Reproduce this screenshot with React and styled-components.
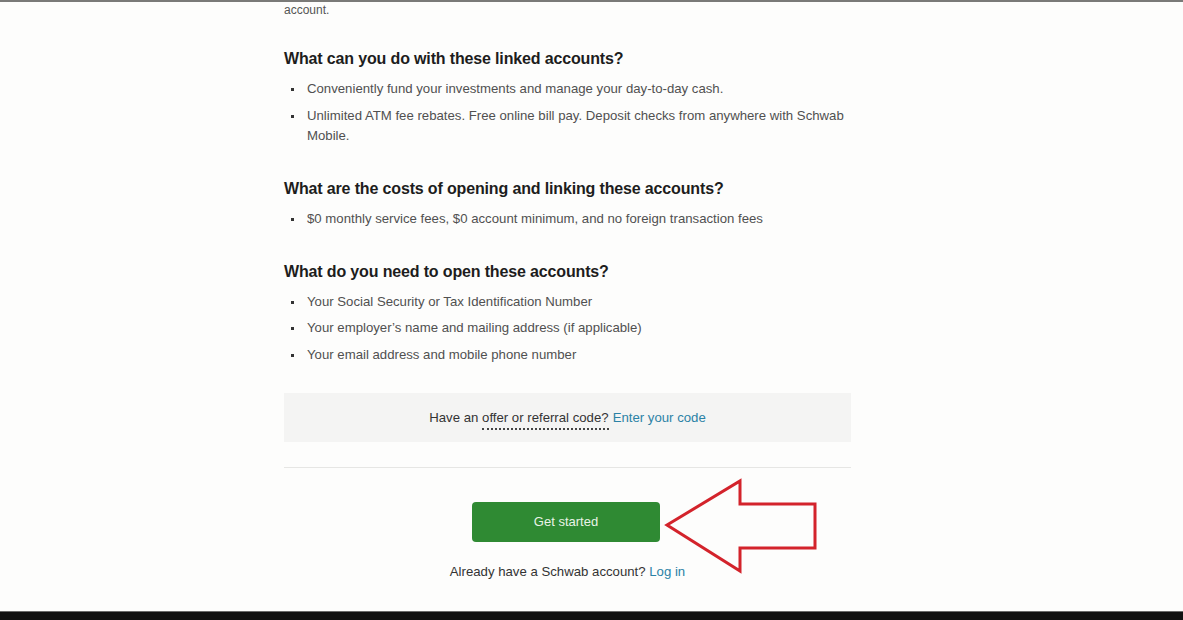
import React from 'react';
import styled, { createGlobalStyle } from 'styled-components';

const GlobalStyle = createGlobalStyle`
  html, body {
    margin: 0;
    padding: 0;
    background: #fdfdfc;
  }
  body {
    font-family: "Liberation Sans", Arial, sans-serif;
  }
`;

const Screen = styled.div`
  width: 1183px;
  height: 620px;
  display: flex;
  flex-direction: column;
  overflow: hidden;
  position: relative;
  border-top: 2px solid #7a7a78;
  box-sizing: border-box;
`;

const Page = styled.div`
  flex: 1;
  overflow: hidden;
  padding-left: 284px;
`;

const Column = styled.div`
  width: 567px;
  display: flex;
  flex-direction: column;
`;

const Tail = styled.p`
  margin: 0;
  padding-top: 1px;
  font-size: 12px;
  line-height: 14px;
  color: #555;
`;

const Heading = styled.h3`
  margin: ${(p) => p.$top}px 0 0;
  font-family: "Liberation Sans", Arial, sans-serif;
  font-size: 16px;
  font-weight: 700;
  letter-spacing: -0.15px;
  line-height: 20px;
  color: #1d1d1d;
`;

const List = styled.ul`
  margin: 10px 0 0;
  padding: 0 0 0 23px;
  list-style: none;
  display: flex;
  flex-direction: column;
  gap: 6.5px;
`;

const Item = styled.li`
  position: relative;
  font-size: 13.2px;
  line-height: 20px;
  color: #505050;
  &::before {
    content: '';
    position: absolute;
    left: -16px;
    top: 9px;
    width: 3px;
    height: 3px;
    background: #333;
  }
`;

const OfferBox = styled.div`
  margin-top: 28px;
  height: 49px;
  background: #f4f4f3;
  display: flex;
  align-items: center;
  justify-content: center;
  font-size: 13.2px;
  color: #333;
  gap: 4px;
`;

const Dotted = styled.span`
  border-bottom: 2px dotted #444;
  padding-bottom: 3px;
`;

const Link = styled.a`
  color: #2b82a6;
  text-decoration: none;
`;

const Rule = styled.hr`
  margin: 25px 0 0;
  border: none;
  border-top: 1px solid #e6e6e4;
`;

const Actions = styled.div`
  display: flex;
  flex-direction: column;
  align-items: center;
  margin-top: 34px;
`;

const StartButton = styled.button`
  width: 188px;
  height: 40px;
  border: none;
  border-radius: 4px;
  background: #2f8a33;
  color: #e9f3e6;
  font-family: "Liberation Sans", Arial, sans-serif;
  font-size: 13px;
  margin-left: -3px;
`;

const Login = styled.p`
  margin: 22px 0 0;
  font-size: 13.2px;
  line-height: 16px;
  color: #333;
`;

const BottomBar = styled.div`
  height: 8px;
  background: #111;
  border-top: 1px solid #6a6a6a;
  flex-shrink: 0;
`;

const Arrow = styled.svg`
  position: absolute;
  left: 660px;
  top: 472px;
`;

export default function App() {
  return (
    <>
      <GlobalStyle />
      <Screen>
        <Page>
          <Column>
            <Tail>account.</Tail>

            <Heading $top={32}>What can you do with these linked accounts?</Heading>
            <List>
              <Item>Conveniently fund your investments and manage your day-to-day cash.</Item>
              <Item>
                Unlimited ATM fee rebates. Free online bill pay. Deposit checks from anywhere with Schwab
                Mobile.
              </Item>
            </List>

            <Heading $top={33}>What are the costs of opening and linking these accounts?</Heading>
            <List>
              <Item>$0 monthly service fees, $0 account minimum, and no foreign transaction fees</Item>
            </List>

            <Heading $top={33}>What do you need to open these accounts?</Heading>
            <List>
              <Item>Your Social Security or Tax Identification Number</Item>
              <Item>Your employer’s name and mailing address (if applicable)</Item>
              <Item>Your email address and mobile phone number</Item>
            </List>

            <OfferBox>
              <span>
                Have an <Dotted>offer or referral code?</Dotted>
              </span>
              <Link href="#">Enter your code</Link>
            </OfferBox>

            <Rule />

            <Actions>
              <StartButton>Get started</StartButton>
              <Login>
                Already have a Schwab account? <Link href="#">Log in</Link>
              </Login>
            </Actions>
          </Column>
        </Page>
        <BottomBar />

        <Arrow width="170" height="110" viewBox="0 0 170 110">
          <polygon
            points="7,51 80,7 80,30 155,30 155,74 80,74 80,97"
            fill="none"
            stroke="#d3232b"
            strokeWidth="3"
            strokeLinejoin="miter"
          />
        </Arrow>
      </Screen>
    </>
  );
}
